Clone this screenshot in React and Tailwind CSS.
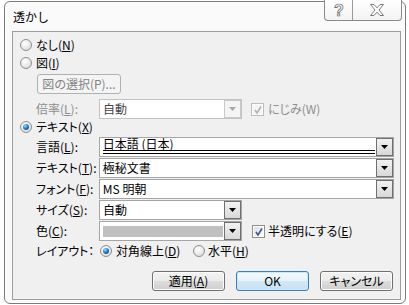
import React from "react";

const Radio = ({ checked }) => (
  <span className="relative inline-block w-[12px] h-[12px] shrink-0 rounded-full border border-[#8e8f8f] bg-[radial-gradient(circle_at_40%_35%,#ffffff,#d4d4d4)]">
    {checked && (
      <span className="absolute left-[2px] top-[2px] w-[6px] h-[6px] rounded-full bg-[radial-gradient(circle_at_35%_30%,#9ad6ff,#1c70b8_55%,#0a3d78)]" />
    )}
  </span>
);

const Check = ({ disabled }) => (
  <span
    className={
      "relative inline-block w-[13px] h-[13px] shrink-0 border p-[1px] bg-white " +
      (disabled ? "border-[#bcbcbc]" : "border-[#8e8f8f]")
    }
  >
    <span
      className={
        "block w-full h-full " +
        (disabled
          ? "bg-[#f4f4f4]"
          : "bg-[linear-gradient(135deg,#dcdcdc,#ffffff)]")
      }
    />
    <svg className="absolute left-[1px] top-[1px]" width="10" height="10" viewBox="0 0 10 10">
      <path
        d="M2 5 L4 8 L8 1.5"
        fill="none"
        stroke={disabled ? "#b4b4b4" : "#3c5a9a"}
        strokeWidth="1.6"
      />
    </svg>
  </span>
);

const Arrow = ({ disabled }) => (
  <span
    className={
      "flex items-center justify-center w-[17px] h-full shrink-0 border " +
      (disabled
        ? "border-[#c9c9c9] bg-[#f4f4f4]"
        : "border-[#707070] bg-[linear-gradient(#f2f2f2,#d8d8d8)]")
    }
  >
    <svg width="7" height="4" viewBox="0 0 7 4">
      <polygon points="0,0 7,0 3.5,4" fill={disabled ? "#a8a8a8" : "#000"} />
    </svg>
  </span>
);

const Combo = ({ wide, disabled, top, children }) => (
  <div
    className={
      "flex h-[20px] border bg-white " +
      (wide ? "w-[296px] " : "w-[143px] ") +
      (disabled ? "border-[#c2c2c2]" : "border-[#a5a5a5]")
    }
  >
    <div
      className={
        "flex-1 min-w-0 flex pl-[3px] pr-[1px] " +
        (top ? "items-start" : "items-center")
      }
    >
      {children}
    </div>
    <Arrow disabled={disabled} />
  </div>
);

const U = ({ children }) => (
  <span className="underline underline-offset-[1px] decoration-[1px]">{children}</span>
);

const Btn = ({ children, def }) => (
  <div
    className={
      "w-[73px] h-[20px] rounded-[3px] border flex items-center justify-center leading-[14px] " +
      (def
        ? "border-[#3c7fb1] bg-[linear-gradient(#f2f9fd_0%,#e6f2fa_50%,#d4e8f5_50%,#c7e0f1_100%)] shadow-[inset_0_0_0_1px_#c9e8fb]"
        : "border-[#707070] bg-[linear-gradient(#f2f2f2_0%,#ebebeb_50%,#dddddd_50%,#cfcfcf_100%)] shadow-[inset_0_0_0_1px_#fcfcfc]")
    }
  >
    {children}
  </div>
);

export default function App() {
  return (
    <div className="w-[409px] h-[305px] overflow-hidden bg-white font-['Noto_Sans_CJK_JP',sans-serif] [font-feature-settings:'palt'] text-[12px] text-black">
      <div className="relative ml-[4px] mt-[1px] w-[402px] h-[303px] rounded-[6px] border border-[#7a7a7a] bg-[#fafafa] shadow-[inset_0_0_0_1px_#ffffff] flex flex-col">
        {/* title */}
        <div className="h-[29px] flex items-center pl-[8px] text-[12px] leading-[14px] [font-feature-settings:normal]">
          透かし
        </div>
        {/* caption buttons */}
        <div className="absolute top-[-2px] right-[3px] flex h-[21px] border border-t-0 border-[#8a8a8a] rounded-b-[4px] bg-[linear-gradient(#ffffff,#f3f3f3)]">
          <div className="w-[28px] h-full flex items-center justify-center border-r border-[#9a9a9a]">
            <svg width="12" height="16" viewBox="0 0 12 16">
              <text
                x="6"
                y="13.5"
                textAnchor="middle"
                fontSize="16"
                fontWeight="bold"
                fontFamily="Liberation Sans, sans-serif"
                fill="#ffffff"
                stroke="#5a5a5a"
                strokeWidth="0.7"
              >
                ?
              </text>
            </svg>
          </div>
          <div className="w-[48px] h-full flex items-center justify-center">
            <svg width="16" height="12" viewBox="0 0 16 12">
              <polygon
                points="1.5,0.5 5,0.5 8,3.8 11,0.5 14.5,0.5 10,6 14.5,11.5 11,11.5 8,8.2 5,11.5 1.5,11.5 6,6"
                fill="#ffffff"
                stroke="#5a5a5a"
                strokeWidth="0.8"
                strokeLinejoin="round"
              />
            </svg>
          </div>
        </div>

        {/* client */}
        <div className="flex-1 ml-[7px] mr-[4px] mb-[3px] border border-[#9c9c9c] bg-[#f0f0f0] flex flex-col pl-[7px] pr-[6px] pt-[4px] leading-[14px]">
          <div className="h-[18px] flex items-center gap-[4px]">
            <Radio />
            <span>
              なし(<U>N</U>)
            </span>
          </div>
          <div className="h-[18px] flex items-center gap-[4px]">
            <Radio />
            <span>
              図(<U>I</U>)
            </span>
          </div>
          <div className="mt-[2px] ml-[17px] w-[84px] h-[20px] rounded-[3px] border border-[#adb2b5] bg-[#f4f4f4] flex items-center justify-center text-[#838383]">
            図の選択(P)...
          </div>
          <div className="mt-[5px] h-[20px] flex items-center">
            <div className="w-[79px] pl-[16px] text-[#8d8d8d]">
              倍率(<U>L</U>):
            </div>
            <Combo disabled>
              <span className="text-[#444]">自動</span>
            </Combo>
            <div className="ml-[9px] flex items-center gap-[4px] text-[#8d8d8d]">
              <Check disabled />
              <span>にじみ(W)</span>
            </div>
          </div>
          <div className="h-[15px] flex items-center gap-[4px]">
            <Radio checked />
            <span>
              テキスト(<U>X</U>)
            </span>
          </div>
          <div className="mt-[3px] h-[20px] flex items-center">
            <div className="w-[79px] pl-[16px]">
              言語(<U>L</U>):
            </div>
            <Combo wide top>
              <div className="flex flex-col w-full">
                <span className="leading-[12px]">日本語 (日本)</span>
                <span className="block h-[1px] bg-black" />
                <span className="mt-[2px] block h-[1px] bg-black" />
              </div>
            </Combo>
          </div>
          <div className="mt-[1px] h-[20px] flex items-center">
            <div className="w-[79px] pl-[16px]">
              テキスト(<U>T</U>):
            </div>
            <Combo wide>
              <span>極秘文書</span>
            </Combo>
          </div>
          <div className="mt-[1px] h-[20px] flex items-center">
            <div className="w-[79px] pl-[16px]">
              フォント(<U>F</U>):
            </div>
            <Combo wide>
              <span>MS 明朝</span>
            </Combo>
          </div>
          <div className="mt-[1px] h-[20px] flex items-center">
            <div className="w-[79px] pl-[16px]">
              サイズ(<U>S</U>):
            </div>
            <Combo>
              <span>自動</span>
            </Combo>
          </div>
          <div className="mt-[1px] h-[20px] flex items-center">
            <div className="w-[79px] pl-[16px]">
              色(<U>C</U>):
            </div>
            <Combo>
              <span className="block w-full h-[11px] bg-[#c0c0c0]" />
            </Combo>
            <div className="ml-[10px] flex items-center gap-[3px]">
              <Check />
              <span>
                半透明にする(<U>E</U>)
              </span>
            </div>
          </div>
          <div className="h-[20px] flex items-center">
            <div className="w-[80px] pl-[16px]">レイアウト：</div>
            <div className="w-[93px] flex items-center gap-[4px]">
              <Radio checked />
              <span>
                対角線上(<U>D</U>)
              </span>
            </div>
            <div className="flex items-center gap-[3px]">
              <Radio />
              <span>
                水平(<U>H</U>)
              </span>
            </div>
          </div>
          <div className="mt-[10px] flex justify-end gap-[11px] pr-[1px]">
            <Btn>
              適用(<U>A</U>)
            </Btn>
            <Btn def>OK</Btn>
            <Btn>キャンセル</Btn>
          </div>
        </div>
      </div>
    </div>
  );
}
